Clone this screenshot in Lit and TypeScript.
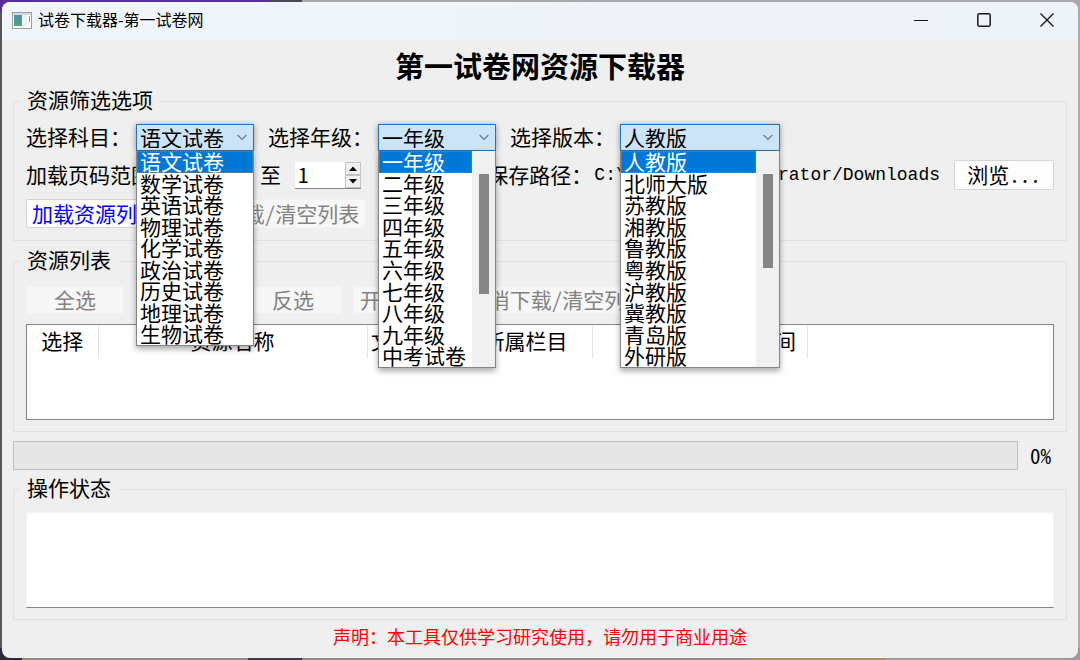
import { LitElement, html, css, nothing } from "lit";
import { customElement, property } from "lit/decorators.js";

const textFont = css`"Noto Sans CJK SC", "Liberation Sans", sans-serif`;

@customElement("combo-box")
class ComboBox extends LitElement {
  @property() label = "";
  @property({ type: Array }) options: string[] = [];
  @property({ type: Number }) thumb = 0;

  static styles = css`
    :host { display: flex; align-items: center; font: 21px/25px ${textFont}; }
    label { width: 110px; white-space: nowrap; padding-bottom: 2px; }
    .box { position: relative; width: 118px; box-shadow: 0 1px 6px rgba(0, 0, 0, 0.4); }
    :host([wide]) .box { width: 160px; }
    select {
      appearance: none; display: block; box-sizing: border-box; width: 100%; height: 27px;
      margin: 0; padding: 0 3px 2px; border: 1px solid #2574b8; border-radius: 0;
      background: #cce4f7; color: #000; font: inherit; outline: none;
    }
    .chevron { position: absolute; right: 7px; top: 10px; pointer-events: none; }
    .popup {
      position: absolute; z-index: 2; left: 0; right: 0; top: 100%; height: 195px;
      box-sizing: border-box; display: flex; background: #fff;
      border: 1px solid #858585; border-top: 0; box-shadow: 0 3px 6px rgba(0, 0, 0, 0.35);
    }
    .popup.scrolls { height: 217px; }
    ul { flex: 1; display: grid; grid-auto-rows: 1fr; margin: 0; padding: 0; list-style: none; line-height: 20px; }
    li { padding-left: 3px; white-space: nowrap; }
    .chosen { background: #0078d7; color: #fff; outline: 1px dotted #6d8699; outline-offset: -1px; }
    .track { width: 23px; background: #f0f0f0; display: flex; justify-content: center; padding-top: 23px; box-sizing: border-box; }
    .thumb { width: 10px; background: #858585; }
  `;

  render() {
    return html`
      <label for="field">${this.label}</label>
      <div class="box">
        <select id="field">
          ${this.options.map((o) => html`<option>${o}</option>`)}
        </select>
        <svg class="chevron" width="10" height="7" viewBox="0 0 10 7" fill="none" stroke="#6b7d8c" stroke-width="1.3">
          <path d="M.6 1 5 5.4 9.4 1" />
        </svg>
        <div class="popup ${this.thumb ? "scrolls" : ""}">
          <ul role="listbox" aria-label=${this.label}>
            ${this.options.map((o, i) => html`
              <li role="option" aria-selected=${i === 0} class=${i === 0 ? "chosen" : ""}>${o}</li>`)}
          </ul>
          ${this.thumb
            ? html`<div class="track"><div class="thumb" style="height:${this.thumb}px"></div></div>`
            : nothing}
        </div>
      </div>
    `;
  }
}

@customElement("spin-box")
class SpinBox extends LitElement {
  @property() name = "";

  static styles = css`
    :host { display: flex; width: 66px; height: 27px; box-sizing: border-box; background: #fff; border-bottom: 1px solid #858585; font: 21px/26px ${textFont}; font-feature-settings: "hwid"; }
    input {
      appearance: textfield; flex: 1; min-width: 0; margin: 0; padding: 0 0 2px 3px; border: 0;
      background: none; font: inherit; font-feature-settings: inherit; outline: none;
    }
    input::-webkit-inner-spin-button { appearance: none; margin: 0; }
    .steps { display: flex; flex-direction: column; width: 16px; }
    button { flex: 1; min-height: 0; display: flex; align-items: center; justify-content: center; padding: 0; border: 1px solid #c4c4c4; background: #f0f0f0; }
  `;

  private step(by: number) {
    const input = this.renderRoot.querySelector("input")!;
    by > 0 ? input.stepUp() : input.stepDown();
  }

  render() {
    return html`
      <input type="number" min="1" value="1" aria-label=${this.name} />
      <div class="steps">
        <button aria-label="增加" @click=${() => this.step(1)}>
          <svg width="8" height="5" viewBox="0 0 8 5"><path d="M0 5 4 .5 8 5z" /></svg>
        </button>
        <button aria-label="减少" @click=${() => this.step(-1)}>
          <svg width="8" height="5" viewBox="0 0 8 5"><path d="M0 0 4 4.5 8 0z" /></svg>
        </button>
      </div>
    `;
  }
}

const subjects = ["语文试卷", "数学试卷", "英语试卷", "物理试卷", "化学试卷", "政治试卷", "历史试卷", "地理试卷", "生物试卷"];
const grades = ["一年级", "二年级", "三年级", "四年级", "五年级", "六年级", "七年级", "八年级", "九年级", "中考试卷"];
const editions = ["人教版", "北师大版", "苏教版", "湘教版", "鲁教版", "粤教版", "沪教版", "冀教版", "青岛版", "外研版"];

@customElement("app-root")
class AppRoot extends LitElement {
  static styles = css`
    :host {
      display: flex; box-sizing: border-box; min-height: 100vh; padding: 2px;
      background:
        linear-gradient(90deg, #55309a 0 25%, #4a4a52 25% 28%, #a9a9ac 28%) top / 100% 12px no-repeat,
        linear-gradient(90deg, #2e2a3c 0 2%, #8d8d8f 2% 23%, #3b3850 23% 28%, #8d8d8f 28% 69%, #a98f5e 69% 82%, #9b9b9b 82%) bottom / 100% 12px no-repeat,
        linear-gradient(90deg, #55555b 0 50%, #ababab 50%);
      font: 21px/28px ${textFont}; font-feature-settings: "hwid"; color: #000;
    }
    .window { flex: 1; min-width: 0; display: flex; flex-direction: column; background: #efefef; border-radius: 8px; overflow: hidden; }
    .titlebar { display: flex; align-items: center; height: 38px; background: linear-gradient(90deg, #f0f6fa, #eef2f9); font-size: 16px; padding-left: 10px; font-feature-settings: normal; }
    .titlebar .name { flex: 1; margin-left: 6px; padding-bottom: 4px; }
    .titlebar button { width: 63px; height: 38px; padding: 0 0 2px; border: 0; background: none; display: flex; align-items: center; justify-content: center; }
    .titlebar .logo { margin-bottom: 2px; }
    main { flex: 1; padding: 0 11px; }
    h1 { margin: 0; padding: 5px 0 2px; font-size: 29px; line-height: 40px; font-weight: 700; text-align: center; }
    fieldset { min-width: 0; margin: 0 0 6px; padding: 9px 12px 12px; border: 1px solid #e0e0e0; }
    legend { margin-left: -6px; padding: 0 7px 4px; line-height: 24px; }
    .row { display: flex; align-items: center; gap: 14px; }
    .filters { display: flex; flex-direction: column; gap: 9px; }
    .pages { height: 30px; gap: 14px; line-height: 28px; }
    .range { display: flex; align-items: center; }
    .range .caption { width: 154px; }
    .caption, .word { padding-bottom: 2px; white-space: nowrap; }
    .save { display: flex; align-items: center; margin-left: auto; white-space: nowrap; }
    .save .caption { width: 107px; }
    .save output { min-width: 345px; font-family: "Liberation Mono", monospace; font-size: 18px; }
    .save button { margin-left: 14px; }
    .buttons { gap: 11px; }
    .btn {
      box-sizing: border-box; height: 28px; min-width: 98px; padding: 0 3px 2px; border: 1px solid #d4d4d4;
      border-radius: 2px; background: #fdfdfd; color: #000; font: inherit; line-height: 24px;
      font-feature-settings: inherit; white-space: nowrap;
    }
    .browse { height: 30px; min-width: 100px; }
    .filters .buttons .btn { height: 29px; }
    .load { min-width: 138px; color: #0000ff; }
    .btn:disabled { background: #f7f7f7; border-color: #f3f3f3; color: #838383; }
    .btn.clear { min-width: 190px; }
    .resources { padding: 11px 12px 11px; margin-bottom: 9px; }
    .grid { margin-top: 10px; height: 96px; box-sizing: border-box; background: #fff; border: 1px solid #858585; }
    table { border-collapse: collapse; table-layout: fixed; }
    th { height: 33px; padding: 0 0 3px; line-height: 26px; font-weight: 400; text-align: center; border-right: 1px solid #e4e4e4; white-space: nowrap; box-sizing: border-box; }
    .c1 { width: 71px; } .c2 { width: 269px; } .c3 { width: 92px; }
    .c4 { width: 133px; } .c5 { width: 109px; } .c6 { width: 106px; }
    .progress { display: flex; align-items: center; gap: 12px; margin-bottom: 5px; padding-right: 16px; }
    .progress label { padding-bottom: 1px; }
    progress { appearance: none; flex: 1; height: 29px; box-sizing: border-box; border: 1px solid #c0c0c0; background: #e6e6e6; }
    progress::-webkit-progress-bar { background: #e6e6e6; }
    progress::-webkit-progress-value { background: #06b025; }
    .status { margin-bottom: 0; padding: 9px 12px 11px; }
    textarea { display: block; width: 100%; height: 96px; box-sizing: border-box; margin: 0; resize: none; border: 1px solid #f4f4f4; border-bottom-color: #858585; background: #fff; font: inherit; outline: none; }
    .notice { margin: 0; padding: 4px 0 8px; color: #ff0000; font-size: 18px; line-height: 24px; text-align: center; font-feature-settings: normal; }
  `;

  render() {
    return html`
      <div class="window">
        <header class="titlebar">
          <svg class="logo" width="20" height="17" viewBox="0 0 20 17">
            <defs>
              <linearGradient id="pane" x1="0" y1="0" x2="0" y2="1">
                <stop offset="0" stop-color="#4d8db0" /><stop offset="1" stop-color="#50a873" />
              </linearGradient>
            </defs>
            <rect x=".5" y=".5" width="19" height="16" fill="#fff" stroke="#999fa3" />
            <rect x="1" y="1" width="18" height="2" fill="#d5dade" />
            <rect x="2" y="3" width="8" height="11" fill="url(#pane)" />
            <rect x="11" y="3" width="4" height="11" fill="#eef3f0" />
            <rect x="17" y="4" width="1" height="6" fill="#64aa92" />
          </svg>
          <span class="name">试卷下载器-第一试卷网</span>
          <button aria-label="最小化">
            <svg width="14" height="14" viewBox="0 0 14 14" stroke="#1a1a1a" stroke-width="1.2"><path d="M0 7.5H14" /></svg>
          </button>
          <button aria-label="最大化">
            <svg width="14" height="14" viewBox="0 0 14 14" fill="none" stroke="#1a1a1a" stroke-width="1.5"><rect x=".8" y=".8" width="12.4" height="12.4" rx="1.4" /></svg>
          </button>
          <button aria-label="关闭">
            <svg width="14" height="14" viewBox="0 0 14 14" stroke="#1a1a1a" stroke-width="1.4"><path d="M.5.5 13.5 13.5M13.5.5.5 13.5" /></svg>
          </button>
        </header>
        <main>
          <h1>第一试卷网资源下载器</h1>
          <fieldset>
            <legend>资源筛选选项</legend>
            <div class="filters">
              <div class="row">
                <combo-box label="选择科目：" .options=${subjects}></combo-box>
                <combo-box label="选择年级：" .options=${grades} .thumb=${120}></combo-box>
                <combo-box wide label="选择版本：" .options=${editions} .thumb=${94}></combo-box>
              </div>
              <div class="row pages">
                <div class="range">
                  <span class="caption">加载页码范围：</span>
                  <spin-box name="起始页码"></spin-box>
                </div>
                <span class="word">至</span>
                <spin-box name="结束页码"></spin-box>
                <div class="save">
                  <span class="caption">保存路径：</span>
                  <output>C:\\Users\\Administrator/Downloads</output>
                  <button class="btn browse">浏览...</button>
                </div>
              </div>
              <div class="row buttons">
                <button class="btn load">加载资源列表</button>
                <button class="btn clear" disabled>取消加载/清空列表</button>
              </div>
            </div>
          </fieldset>
          <fieldset class="resources">
            <legend>资源列表</legend>
            <div class="row buttons">
              <button class="btn" disabled>全选</button>
              <button class="btn" disabled>全不选</button>
              <button class="btn" disabled>反选</button>
              <button class="btn" disabled>开始下载</button>
              <button class="btn clear" disabled>取消下载/清空列表</button>
            </div>
            <div class="grid">
              <table>
                <thead>
                  <tr>
                    <th class="c1">选择</th>
                    <th class="c2">资源名称</th>
                    <th class="c3">文件类型</th>
                    <th class="c4">所属栏目</th>
                    <th class="c5">大小</th>
                    <th class="c6">更新时间</th>
                  </tr>
                </thead>
              </table>
            </div>
          </fieldset>
          <div class="progress">
            <progress id="done" max="100" value="0"></progress>
            <label for="done">0%</label>
          </div>
          <fieldset class="status">
            <legend>操作状态</legend>
            <textarea aria-label="操作状态" readonly></textarea>
          </fieldset>
          <p class="notice">声明：本工具仅供学习研究使用，请勿用于商业用途</p>
        </main>
      </div>
    `;
  }
}
